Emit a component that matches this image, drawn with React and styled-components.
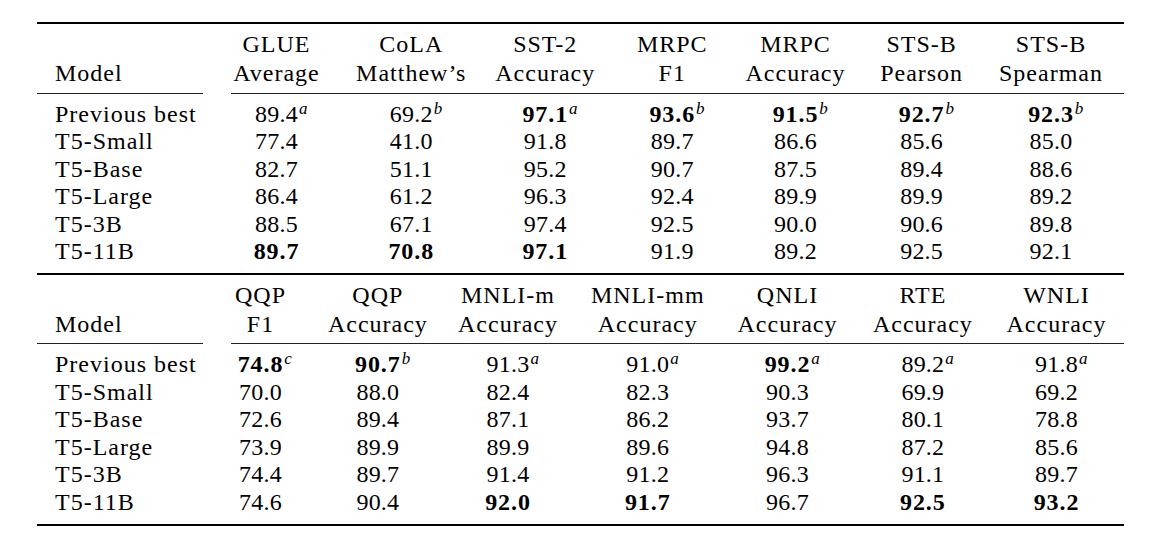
import styled, { createGlobalStyle } from 'styled-components';

const Global = createGlobalStyle`
  html, body {
    margin: 0;
    padding: 0;
    background: #fff;
  }
  body {
    font-family: "Liberation Serif", "Times New Roman", serif;
    color: #000;
  }
`

const Page = styled.div`
  width: 1176px;
  height: 534px;
  box-sizing: border-box;
  padding: 22px 0 0 37px;
`

const Tbl = styled.div`
  width: 1087px;
  border-top: 2px solid #000;
  border-bottom: 2px solid #000;
`

const Section = styled.div`
  & + & {
    border-top: 2px solid #000;
  }
`

const HeadRow = styled.div`
  display: grid;
  grid-template-columns: ${p => p.$cols};
  padding: ${p => p.$pad};
  font-size: 24px;
  letter-spacing: 1px;
  line-height: 29px;
`

const HeadCell = styled.div`
  display: flex;
  flex-direction: column;
  align-items: center;
  white-space: nowrap;
`

const ModelHead = styled.div`
  align-self: end;
  padding-left: 18px;
`

const RuleRow = styled.div`
  display: flex;
  gap: 28px;
`

const Rule = styled.div`
  height: 1px;
  background: #222;
  width: ${p => p.$w || 'auto'};
  flex: ${p => (p.$w ? 'none' : '1')};
`

const Body = styled.div`
  padding: ${p => p.$pad};
`

const Row = styled.div`
  display: grid;
  grid-template-columns: ${p => p.$cols};
  height: 27.6px;
  line-height: 27.6px;
  font-size: 24px;
`

const Label = styled.div`
  padding-left: 18px;
  letter-spacing: 1px;
  white-space: nowrap;
`

const Cell = styled.div`
  text-align: center;
`

const Num = styled.span`
  position: relative;
  display: inline-block;
  letter-spacing: ${p => (p.$bold ? '0.9px' : '0.2px')};
  font-weight: ${p => (p.$bold ? 700 : 400)};
`

const Sup = styled.span`
  position: absolute;
  left: calc(100% + 1px);
  top: -1px;
  font-size: 17px;
  line-height: 17px;
  font-style: italic;
  font-weight: 400;
  letter-spacing: 0;
`

function Value({ v }) {
  const bold = v.startsWith('*');
  const [num, sup] = v.replace('*', '').split('^');
  return (
    <Num $bold={bold}>
      {num}
      {sup && <Sup>{sup}</Sup>}
    </Num>
  )
}

const tables = [
  {
    cols: '173px 133px 136.5px 131.5px 122.5px 124px 128.25px 130.5px',
    headPad: '6px 0 5px',
    bodyPad: '6.5px 0 7px',
    heads: [
      ['GLUE', 'Average'],
      ['CoLA', 'Matthew’s'],
      ['SST-2', 'Accuracy'],
      ['MRPC', 'F1'],
      ['MRPC', 'Accuracy'],
      ['STS-B', 'Pearson'],
      ['STS-B', 'Spearman'],
    ],
    rows: [
      ['Previous best', '89.4^a', '69.2^b', '*97.1^a', '*93.6^b', '*91.5^b', '*92.7^b', '*92.3^b'],
      ['T5-Small', '77.4', '41.0', '91.8', '89.7', '86.6', '85.6', '85.0'],
      ['T5-Base', '82.7', '51.1', '95.2', '90.7', '87.5', '89.4', '88.6'],
      ['T5-Large', '86.4', '61.2', '96.3', '92.4', '89.9', '89.9', '89.2'],
      ['T5-3B', '88.5', '67.1', '97.4', '92.5', '90.0', '90.6', '89.8'],
      ['T5-11B', '*89.7', '*70.8', '*97.1', '91.9', '89.2', '92.5', '92.1'],
    ],
  },
  {
    cols: '167.5px 112px 122.75px 137.5px 142px 137.5px 133.25px 134px',
    headPad: '5.5px 0 4.5px',
    bodyPad: '7px 0 7px',
    heads: [
      ['QQP', 'F1'],
      ['QQP', 'Accuracy'],
      ['MNLI-m', 'Accuracy'],
      ['MNLI-mm', 'Accuracy'],
      ['QNLI', 'Accuracy'],
      ['RTE', 'Accuracy'],
      ['WNLI', 'Accuracy'],
    ],
    rows: [
      ['Previous best', '*74.8^c', '*90.7^b', '91.3^a', '91.0^a', '*99.2^a', '89.2^a', '91.8^a'],
      ['T5-Small', '70.0', '88.0', '82.4', '82.3', '90.3', '69.9', '69.2'],
      ['T5-Base', '72.6', '89.4', '87.1', '86.2', '93.7', '80.1', '78.8'],
      ['T5-Large', '73.9', '89.9', '89.9', '89.6', '94.8', '87.2', '85.6'],
      ['T5-3B', '74.4', '89.7', '91.4', '91.2', '96.3', '91.1', '89.7'],
      ['T5-11B', '74.6', '90.4', '*92.0', '*91.7', '96.7', '*92.5', '*93.2'],
    ],
  },
]

export default function App() {
  return (
    <Page>
      <Global />
      <Tbl>
        {tables.map((t, i) => (
          <Section key={i}>
            <HeadRow $cols={t.cols} $pad={t.headPad}>
              <ModelHead>Model</ModelHead>
              {t.heads.map((h, j) => (
                <HeadCell key={j}>
                  <span>{h[0]}</span>
                  <span>{h[1]}</span>
                </HeadCell>
              ))}
            </HeadRow>
            <RuleRow>
              <Rule $w="166px" />
              <Rule />
            </RuleRow>
            <Body $pad={t.bodyPad}>
              {t.rows.map((r, k) => (
                <Row key={k} $cols={t.cols}>
                  <Label>{r[0]}</Label>
                  {r.slice(1).map((v, j) => (
                    <Cell key={j}>
                      <Value v={v} />
                    </Cell>
                  ))}
                </Row>
              ))}
            </Body>
          </Section>
        ))}
      </Tbl>
    </Page>
  )
}
